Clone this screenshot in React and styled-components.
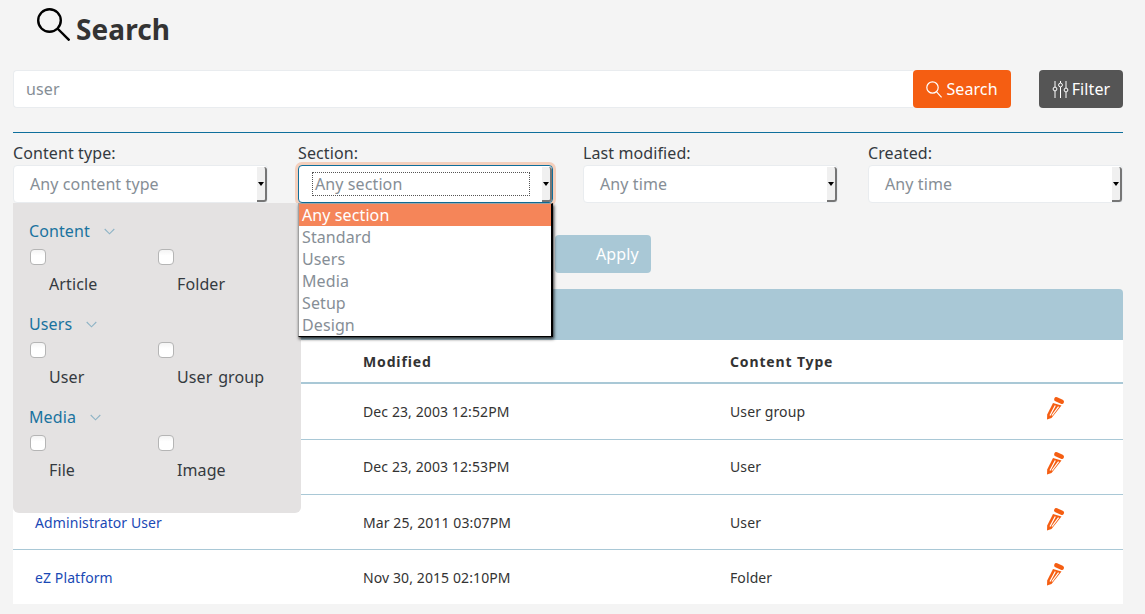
import React from 'react'
import styled, { createGlobalStyle } from 'styled-components'

const GlobalStyle = createGlobalStyle`
  * { box-sizing: border-box; }
  html, body { margin: 0; padding: 0; }
  body {
    background: #f4f4f4;
    font-family: "Noto Sans", "Open Sans", sans-serif;
    letter-spacing: 0.1px;
    color: #343a40;
    overflow: hidden;
  }
`

const Page = styled.div`
  width: 1145px;
  height: 614px;
  padding: 0 22px 0 13px;
  overflow: hidden;
`

const Title = styled.h1`
  display: flex;
  align-items: flex-start;
  gap: 6px;
  height: 70px;
  margin: 0;
  padding: 8px 0 0 24px;
  font-size: 28px;
  line-height: 43px;
  font-weight: 700;
  color: #333;
`

const TitleIcon = styled.svg`
  width: 33px;
  height: 33px;
  flex: none;
`

const SearchRow = styled.div`
  display: flex;
  height: 38px;
`

const SearchInput = styled.div`
  width: 900px;
  padding-left: 12px;
  background: #fff;
  border: 1px solid #e9ecef;
  border-right: 0;
  border-radius: 4px 0 0 4px;
  font-size: 16px;
  line-height: 36px;
  color: #868e96;
`

const Button = styled.div`
  display: flex;
  align-items: center;
  justify-content: center;
  gap: ${props => props.$gap}px;
  width: ${props => props.$width}px;
  margin-left: ${props => props.$offset || 0}px;
  background: ${props => props.$bg};
  border-radius: 4px;
  font-size: 16px;
  color: #fff;
`

const Divider = styled.div`
  height: 1px;
  margin-top: 24px;
  background: #0e6f9c;
`

const Filters = styled.div`
  display: grid;
  grid-template-columns: repeat(4, 285px);
  margin-top: 8px;
`

const Field = styled.div`
  position: relative;
  width: 255px;
  height: 62px;
`

const Label = styled.div`
  height: 24px;
  font-size: 16px;
  line-height: 24px;
  color: #343a40;
`

const SelectBox = styled.div`
  position: relative;
  display: flex;
  height: 38px;
  padding-left: ${props => (props.$focused ? '13px' : '16px')};
  background: #fff;
  border: 1px solid ${props => (props.$focused ? '#0e6f9c' : '#e9ecef')};
  border-radius: 4px;
  box-shadow: ${props => (props.$focused ? '0 0 0 3px rgba(245, 94, 18, 0.25)' : 'none')};
  font-size: 16px;
  line-height: 36px;
  color: #868e96;
`

const FocusRing = styled.span`
  align-self: center;
  width: 218px;
  height: 24px;
  padding-left: 2px;
  border: 1px dotted #555;
  line-height: 22px;
`

const ArrowBox = styled.span`
  position: absolute;
  top: 1px;
  right: 0;
  bottom: 0;
  width: 10px;
  background: #f0f0f0;
  border-right: 2px solid #767676;
  border-bottom: 2px solid #767676;
  border-radius: 0 3px 3px 0;

  &::after {
    content: '';
    position: absolute;
    top: 15px;
    left: 1px;
    border-left: 3px solid transparent;
    border-right: 3px solid transparent;
    border-top: 4px solid #000;
  }
`

const Dropdown = styled.div`
  position: absolute;
  z-index: 3;
  top: 62px;
  left: 0;
  width: 255px;
  height: 134px;
  background: #fff;
  border: 1px solid #a0a0a0;
  border-right: 2px solid #000;
  border-bottom-color: #000;
  box-shadow: 1px 2px 3px rgba(0, 0, 0, 0.8);
  font-size: 16px;
  line-height: 22px;
  color: #868e96;
`

const Option = styled.div`
  padding-left: 3px;
  height: 22px;
  background: ${props => (props.$selected ? '#f58559' : 'transparent')};
  color: ${props => (props.$selected ? '#fff' : '#868e96')};
`

const TypePanel = styled.div`
  position: absolute;
  z-index: 2;
  top: 62px;
  left: 0;
  width: 288px;
  height: 310px;
  padding: 16px 16px 0;
  background: #e4e2e2;
  border-radius: 0 0 6px 6px;
`

const Group = styled.div`
  height: 93px;
`

const GroupTitle = styled.div`
  display: flex;
  align-items: center;
  gap: 14px;
  height: 24px;
  font-size: 16px;
  color: #1a739f;
`

const Chevron = styled.svg`
  width: 11px;
  height: 7px;
  flex: none;
`

const CheckRow = styled.div`
  display: grid;
  grid-template-columns: 128px 128px;
  margin-top: 6px;
  padding-left: 1px;
`

const Check = styled.div`
  display: flex;
  flex-direction: column;
`

const CheckBox = styled.span`
  width: 16px;
  height: 16px;
  background: linear-gradient(#f4f4f4, #fff 40%);
  border: 1px solid #b5b5b5;
  border-radius: 4px;
`

const CheckLabel = styled.span`
  margin: 7px 0 0 19px;
  font-size: 16px;
  line-height: 24px;
  word-spacing: 1.5px;
  color: #343a40;
`

const ApplyRow = styled.div`
  height: 54px;
  margin-top: 32px;
  padding-left: 542px;
`

const ApplyButton = styled.div`
  width: 96px;
  height: 38px;
  padding-left: 41px;
  background: #a9c8d6;
  border-radius: 4px;
  font-size: 16px;
  line-height: 38px;
  color: #fff;
`

const ResultsBand = styled.div`
  height: 51px;
  background: #a9c8d6;
  border-radius: 4px 4px 0 0;
`

const Table = styled.div`
  background: #fff;
  font-size: 14px;
  color: #333;
`

const Row = styled.div`
  display: grid;
  grid-template-columns: 350px 367px 310px 83px;
  align-items: center;
  height: ${props => props.$height}px;
  padding-bottom: ${props => props.$lift || 0}px;
  border-bottom: ${props => (props.$last ? '0' : `${props.$line || 1}px solid #a9c8d6`)};
  font-weight: ${props => (props.$head ? 700 : 400)};
  letter-spacing: ${props => (props.$head ? '0.85px' : 'inherit')};
`

const NameCell = styled.a`
  padding-left: 22px;
  color: #1a49b5;
`

const PencilIcon = styled.svg`
  width: 20px;
  height: 26px;
  margin: 0 0 5px 5px;
`

const rows = [
  { name: '', modified: 'Dec 23, 2003 12:52PM', type: 'User group', height: 56 },
  { name: '', modified: 'Dec 23, 2003 12:53PM', type: 'User', height: 55, lift: 1 },
  { name: 'Administrator User', modified: 'Mar 25, 2011 03:07PM', type: 'User', height: 55 },
  { name: 'eZ Platform', modified: 'Nov 30, 2015 02:10PM', type: 'Folder', height: 54, last: true },
]

const groups = [
  { title: 'Content', items: ['Article', 'Folder'] },
  { title: 'Users', items: ['User', 'User group'] },
  { title: 'Media', items: ['File', 'Image'] },
]

const sections = ['Any section', 'Standard', 'Users', 'Media', 'Setup', 'Design']

const Pencil = () => (
  <PencilIcon viewBox="0 0 20 26" fill="none">
    <path d="M11.3 3.3l5.5 2.5" stroke="#f55e12" strokeWidth="4.4" strokeLinecap="round" />
    <path d="M8 7l8.5 2.5L6.5 22 2 23.5l.2-5z" fill="#f55e12" />
    <path d="M10.3 9.5L5 19.5M13.6 10.6L7 19.5" stroke="#fff" strokeWidth="1.2" />
  </PencilIcon>
)

const App = () => (
  <Page>
    <GlobalStyle />
    <Title>
      <TitleIcon viewBox="0 0 33 33" fill="none" stroke="#000" strokeWidth="2.4">
        <circle cx="12.5" cy="12.5" r="11.3" />
        <path d="M20.5 20.5l12 12" />
      </TitleIcon>
      Search
    </Title>

    <SearchRow>
      <SearchInput>user</SearchInput>
      <Button $width={98} $gap={4} $bg="#f55e12">
        <svg width="16" height="17" viewBox="0 0 16 17" fill="none" stroke="#fff" strokeWidth="1.2">
          <circle cx="6.5" cy="6.5" r="5.7" />
          <path d="M10.6 10.8l5 5.6" />
        </svg>
        Search
      </Button>
      <Button $width={84} $gap={3} $offset={28} $bg="#555">
        <svg width="17" height="17" viewBox="0 0 17 17" fill="none" stroke="#fff" strokeWidth="1">
          <path d="M3 0v6M3 10v7M8.5 0v2M8.5 6v11M14 0v7M14 11v6" />
          <circle cx="3" cy="8" r="1.9" />
          <circle cx="8.5" cy="4" r="1.9" />
          <circle cx="14" cy="9" r="1.9" />
        </svg>
        Filter
      </Button>
    </SearchRow>

    <Divider />

    <Filters>
      <Field>
        <Label>Content type:</Label>
        <SelectBox>Any content type<ArrowBox /></SelectBox>
        <TypePanel>
          {groups.map(group => (
            <Group key={group.title}>
              <GroupTitle>
                {group.title}
                <Chevron viewBox="0 0 11 7" fill="none" stroke="#8fb4c6" strokeWidth="1.1">
                  <path d="M.7 1l4.8 4.8L10.3 1" />
                </Chevron>
              </GroupTitle>
              <CheckRow>
                {group.items.map(item => (
                  <Check key={item}>
                    <CheckBox />
                    <CheckLabel>{item}</CheckLabel>
                  </Check>
                ))}
              </CheckRow>
            </Group>
          ))}
        </TypePanel>
      </Field>
      <Field>
        <Label>Section:</Label>
        <SelectBox $focused>
          <FocusRing>Any section</FocusRing>
          <ArrowBox />
        </SelectBox>
        <Dropdown>
          {sections.map((section, i) => (
            <Option key={section} $selected={i === 0}>{section}</Option>
          ))}
        </Dropdown>
      </Field>
      <Field>
        <Label>Last modified:</Label>
        <SelectBox>Any time<ArrowBox /></SelectBox>
      </Field>
      <Field>
        <Label>Created:</Label>
        <SelectBox>Any time<ArrowBox /></SelectBox>
      </Field>
    </Filters>

    <ApplyRow>
      <ApplyButton>Apply</ApplyButton>
    </ApplyRow>

    <ResultsBand />
    <Table>
      <Row $head $height={44} $line={2}>
        <span />
        <span>Modified</span>
        <span>Content Type</span>
        <span />
      </Row>
      {rows.map(row => (
        <Row key={row.modified} $height={row.height} $lift={row.lift} $last={row.last}>
          <NameCell>{row.name}</NameCell>
          <span>{row.modified}</span>
          <span>{row.type}</span>
          <Pencil />
        </Row>
      ))}
    </Table>
  </Page>
)

export default App
